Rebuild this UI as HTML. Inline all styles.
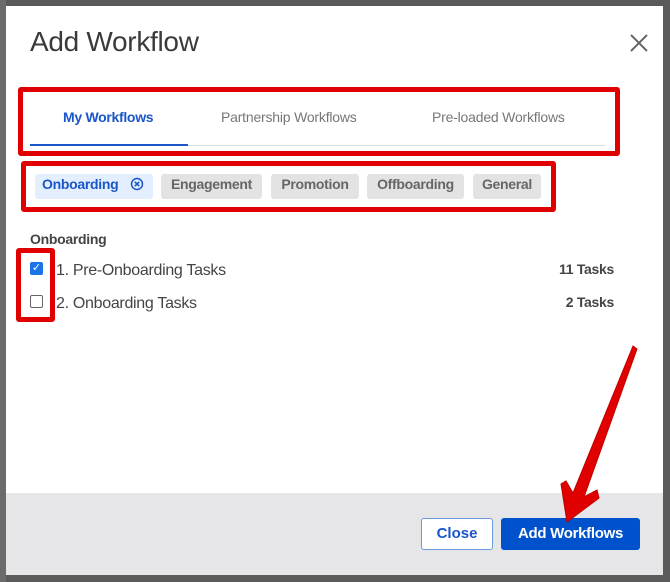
<!DOCTYPE html><html><head><style>
body{margin:0;width:670px;height:582px;background:#5a5a5a;position:relative;overflow:hidden;font-family:"Liberation Sans",sans-serif}
.a{position:absolute;white-space:nowrap}
.c{background:#e3e3e3;border-radius:3px;font-size:14px;font-weight:bold;color:#666;text-align:center;line-height:21px;height:25px;top:174px;letter-spacing:-0.3px}
</style></head><body>
<div class="a" style="left:0;top:0;width:6px;height:582px;background:#6b6b6b"></div>
<div class="a" style="left:6px;top:6px;width:657px;height:569px;background:#fff"></div>
<div class="a" style="left:6px;top:493px;width:657px;height:82px;background:#e6e6e9"></div>
<div class="a" style="left:30px;top:26px;font-size:28px;color:#3a3a3a;letter-spacing:-0.3px">Add Workflow</div>
<svg class="a" style="left:630px;top:34px" width="18" height="18"><path d="M1 1L17 17M17 1L1 17" stroke="#666" stroke-width="2"/></svg>
<div class="a" style="left:18px;top:87px;width:592px;height:59px;border:5px solid #e00000;border-radius:3px"></div>
<div class="a" style="left:30px;top:145px;width:575px;height:1px;background:#ddd"></div>
<div class="a" style="left:30px;top:144px;width:158px;height:2px;background:#1a56c8"></div>
<div class="a" style="left:63px;top:109px;font-size:14px;font-weight:bold;color:#1a56c8;letter-spacing:-0.3px">My Workflows</div>
<div class="a" style="left:221px;top:109px;font-size:14px;color:#777;letter-spacing:-0.2px">Partnership Workflows</div>
<div class="a" style="left:432px;top:109px;font-size:14px;color:#777;letter-spacing:-0.2px">Pre-loaded Workflows</div>
<div class="a" style="left:21px;top:161px;width:525px;height:41px;border:5px solid #e00000;border-radius:3px"></div>
<div class="a" style="left:35px;top:174px;width:118px;height:25px;background:#e3efff;border-radius:3px"></div>
<div class="a" style="left:42px;top:176px;font-size:14px;font-weight:bold;color:#1a56c8;letter-spacing:-0.3px">Onboarding</div>
<svg class="a" style="left:130px;top:177px" width="14" height="14"><circle cx="7" cy="7" r="5.5" fill="none" stroke="#1a56c8" stroke-width="1.5"/><path d="M4.8 4.8L9.2 9.2M9.2 4.8L4.8 9.2" stroke="#1a56c8" stroke-width="1.5"/></svg>
<div class="a c" style="left:161px;width:101px">Engagement</div>
<div class="a c" style="left:271px;width:88px">Promotion</div>
<div class="a c" style="left:367px;width:97px">Offboarding</div>
<div class="a c" style="left:473px;width:68px">General</div>
<div class="a" style="left:30px;top:231px;font-size:14px;font-weight:bold;color:#444;letter-spacing:-0.3px">Onboarding</div>
<div class="a" style="left:16px;top:248px;width:29px;height:64px;border:5px solid #e00000;border-radius:3px"></div>
<div class="a" style="left:30px;top:262px;width:13px;height:13px;background:#1a73e8;border-radius:2px;color:#fff;font-size:11px;line-height:13px;text-align:center">✓</div>
<div class="a" style="left:30px;top:295px;width:11px;height:11px;border:1px solid #666;border-radius:2px;background:#fff"></div>
<div class="a" style="left:56px;top:262px;font-size:16px;color:#444;letter-spacing:-0.3px">1. Pre-Onboarding Tasks</div>
<div class="a" style="left:56px;top:295px;font-size:16px;color:#444;letter-spacing:-0.3px">2. Onboarding Tasks</div>
<div class="a" style="right:56px;top:261px;font-size:14px;font-weight:bold;color:#444;letter-spacing:-0.3px">11 Tasks</div>
<div class="a" style="right:56px;top:294px;font-size:14px;font-weight:bold;color:#444;letter-spacing:-0.3px">2 Tasks</div>
<div class="a" style="left:421px;top:518px;width:70px;height:30px;border:1px solid #6a9be0;border-radius:3px;background:#fff;color:#1a56c8;font-size:15px;font-weight:bold;text-align:center;line-height:30px">Close</div>
<div class="a" style="left:501px;top:518px;width:139px;height:32px;background:#0052cc;border-radius:3px;color:#fff;font-size:15px;font-weight:bold;text-align:center;line-height:32px;letter-spacing:-0.3px">Add Workflows</div>
<svg class="a" style="left:0;top:0" width="670" height="582"><path d="M633 346 L637 349 L584 497 L597 490 L599 498 L567 522 L561 484 L566 481 L573 493 Z" fill="#e00000" stroke="#c00000" stroke-width="1"/></svg>
</body></html>
